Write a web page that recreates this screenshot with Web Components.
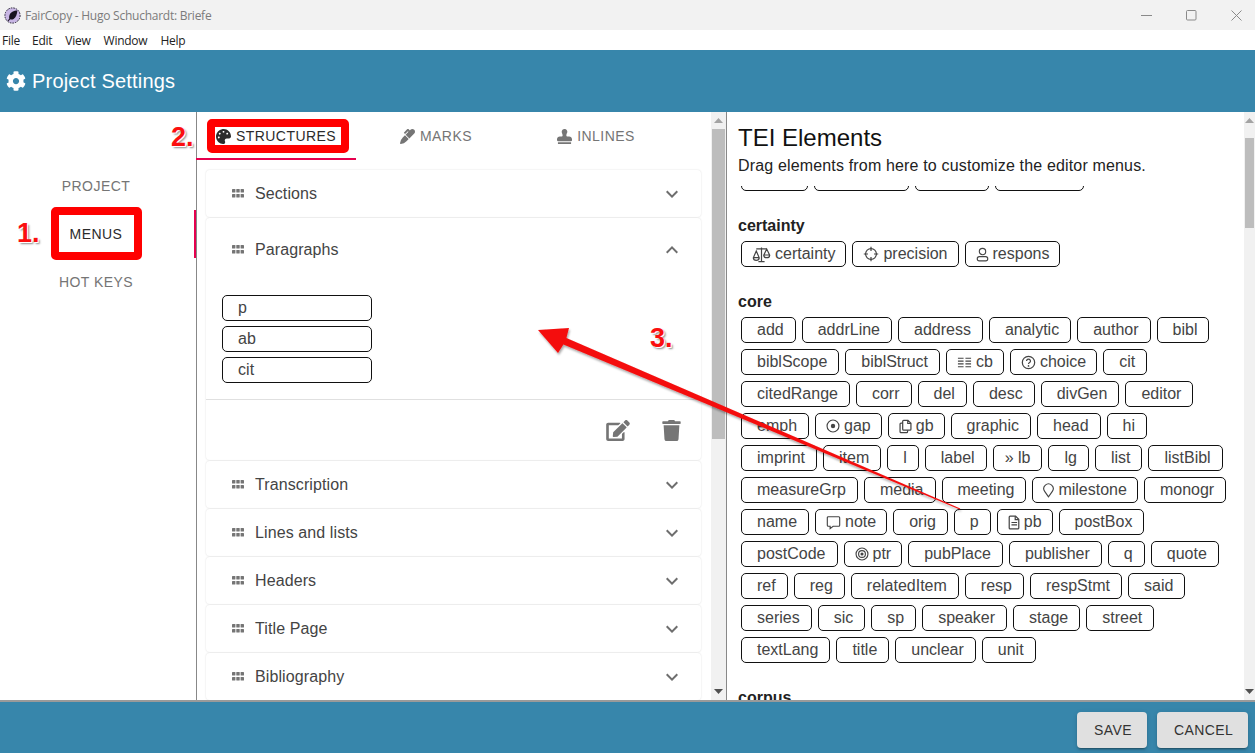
<!DOCTYPE html>
<html>
<head>
<meta charset="utf-8">
<title>FairCopy</title>
<style>
  html, body { margin: 0; padding: 0; height: 100%; overflow: hidden; background: #fff; }
  body { font-family: "Liberation Sans", Arial, sans-serif; }
</style>
</head>
<body>
<project-settings></project-settings>

<script>
const ICONS = {
  cog: ['0 0 512 512', '<path fill="currentColor" d="M487.4 315.7l-42.6-24.6c4.3-23.2 4.3-47 0-70.2l42.6-24.6c4.9-2.8 7.1-8.6 5.5-14-11.1-35.6-30-67.8-54.7-94.6-3.8-4.1-10-5.1-14.8-2.3L380.8 110c-17.9-15.4-38.5-27.3-60.8-35.1V25.8c0-5.6-3.9-10.5-9.4-11.7-36.7-8.2-74.3-7.8-109.2 0-5.5 1.2-9.4 6.1-9.4 11.7V75c-22.2 7.9-42.8 19.8-60.8 35.1L88.7 85.5c-4.9-2.8-11-1.9-14.8 2.3-24.7 26.7-43.6 58.9-54.7 94.6-1.7 5.4.6 11.2 5.5 14L67.3 221c-4.3 23.2-4.3 47 0 70.2l-42.6 24.6c-4.9 2.8-7.1 8.6-5.5 14 11.1 35.6 30 67.8 54.7 94.6 3.8 4.1 10 5.1 14.8 2.3l42.6-24.6c17.9 15.4 38.5 27.3 60.8 35.1v49.2c0 5.6 3.9 10.5 9.4 11.7 36.7 8.2 74.3 7.8 109.2 0 5.5-1.2 9.4-6.1 9.4-11.7v-49.2c22.2-7.9 42.8-19.8 60.8-35.1l42.6 24.6c4.9 2.8 11 1.9 14.8-2.3 24.7-26.7 43.6-58.9 54.7-94.6 1.5-5.5-.7-11.3-5.6-14.1zM256 336c-44.1 0-80-35.9-80-80s35.9-80 80-80 80 35.9 80 80-35.9 80-80 80z"/>'],
  palette: ['0 0 512 512', '<path fill="currentColor" d="M204.3 5C104.9 24.4 24.8 104.3 5.2 203.4c-37 187 131.7 326.4 258.8 306.7 41.2-6.4 61.4-54.6 42.5-91.7-23.1-45.4 9.9-98.4 60.9-98.4h79.7c35.8 0 64.8-29.6 64.9-65.3C511.5 97.1 368.1-26.9 204.3 5zM96 320c-17.7 0-32-14.3-32-32s14.3-32 32-32 32 14.3 32 32-14.3 32-32 32zm32-128c-17.7 0-32-14.3-32-32s14.3-32 32-32 32 14.3 32 32-14.3 32-32 32zm128-64c-17.7 0-32-14.3-32-32s14.3-32 32-32 32 14.3 32 32-14.3 32-32 32zm128 64c-17.7 0-32-14.3-32-32s14.3-32 32-32 32 14.3 32 32-14.3 32-32 32z"/>'],
  marker: ['0 0 512 512', '<path fill="currentColor" d="M93.95 290.03A327.038 327.038 0 0 0 .17 485.11l-.03.23c-1.7 15.28 11.21 28.2 26.49 26.51a327.02 327.02 0 0 0 195.34-93.8l75.4-75.4-128.02-128.02-75.4 75.4zM485.49 26.51c-35.35-35.35-92.67-35.35-128.02 0l-21.76 21.76-36.56-36.55c-15.62-15.62-40.95-15.62-56.56 0L138.47 115.84c-6.25 6.25-6.25 16.38 0 22.63l22.62 22.62c6.25 6.25 16.38 6.25 22.63 0l87.15-87.15 19.59 19.59L191.98 192 320 320.02l165.49-165.49c35.35-35.35 35.35-92.66 0-128.02z"/>'],
  stamp: ['0 0 512 512', '<path fill="currentColor" d="M32 512h448v-64H32v64zm384-256h-66.56c-16.26 0-29.44-13.18-29.44-29.44v-9.46c0-27.37 8.88-53.41 21.46-77.72 9.11-17.61 12.9-38.39 9.05-60.42-6.77-38.78-38.47-70.7-77.26-77.45C212.62-9.04 160 37.33 160 96c0 14.16 3.12 27.54 8.69 39.58C182.02 164.43 192 194.7 192 226.49v.07c0 16.26-13.18 29.44-29.44 29.44H96c-53.02 0-96 42.98-96 96v32c0 17.67 14.33 32 32 32h448c17.67 0 32-14.33 32-32v-32c0-53.02-42.98-96-96-96z"/>'],
  edit: ['0 0 576 512', '<path fill="currentColor" d="M402.6 83.2l90.2 90.2c3.8 3.8 3.8 10 0 13.8L274.4 405.6l-92.8 10.3c-12.4 1.4-22.9-9.1-21.5-21.5l10.3-92.8L388.8 83.2c3.8-3.8 10-3.8 13.8 0zm162-22.9l-48.8-48.8c-15.2-15.2-39.9-15.2-55.2 0l-35.4 35.4c-3.8 3.8-3.8 10 0 13.8l90.2 90.2c3.8 3.8 10 3.8 13.8 0l35.4-35.4c15.2-15.3 15.2-40 0-55.2zM384 346.2V448H64V128h229.8c3.2 0 6.2-1.3 8.5-3.5l40-40c7.6-7.6 2.2-20.5-8.5-20.5H48C21.5 64 0 85.5 0 112v352c0 26.5 21.5 48 48 48h352c26.5 0 48-21.5 48-48V306.2c0-10.7-12.9-16-20.5-8.5l-40 40c-2.2 2.3-3.5 5.3-3.5 8.5z"/>'],
  trash: ['0 0 448 512', '<path fill="currentColor" d="M432 32H312l-9.4-18.7A24 24 0 0 0 281.1 0H166.8a23.72 23.72 0 0 0-21.4 13.3L136 32H16A16 16 0 0 0 0 48v32a16 16 0 0 0 16 16h416a16 16 0 0 0 16-16V48a16 16 0 0 0-16-16zM53.2 467a48 48 0 0 0 47.9 45h245.8a48 48 0 0 0 47.9-45L416 128H32z"/>'],
  grip: ['0 0 12 9', '<g fill="currentColor"><rect x="0" y="0" width="3.4" height="3.6" rx=".6"/><rect x="4.3" y="0" width="3.4" height="3.6" rx=".6"/><rect x="8.6" y="0" width="3.4" height="3.6" rx=".6"/><rect x="0" y="5" width="3.4" height="3.6" rx=".6"/><rect x="4.3" y="5" width="3.4" height="3.6" rx=".6"/><rect x="8.6" y="5" width="3.4" height="3.6" rx=".6"/></g>'],
  down: ['0 0 24 24', '<path fill="currentColor" d="M16.59 8.59L12 13.17 7.41 8.59 6 10l6 6 6-6z"/>'],
  up: ['0 0 24 24', '<path fill="currentColor" d="M12 8l-6 6 1.41 1.41L12 10.83l4.59 4.58L18 14z"/>'],
  scale: ['0 0 16 16', '<g fill="none" stroke="currentColor" stroke-width="1"><path d="M8 2v11.5M5.4 14h5.2M3.6 3.2h8.8"/><path d="M3.6 5L1.2 10.6h4.8zM1.2 11a2.4 1.9 0 0 0 4.8 0"/><path d="M12.4 3.4L10 8.4h4.8zM10 8.8a2.4 1.9 0 0 0 4.8 0"/></g>'],
  crosshair: ['0 0 16 16', '<g fill="none" stroke="currentColor" stroke-width="1.2"><circle cx="8" cy="8" r="5.4"/><path d="M8 .8v4.2M8 11v4.2M.8 8h4.2M11 8h4.2"/></g>'],
  user: ['1.5 0 13 16', '<g fill="none" stroke="currentColor" stroke-width="1.2"><circle cx="8" cy="4.8" r="3.4"/><rect x="2.4" y="10.2" width="11.2" height="4.6" rx="2.2"/></g>'],
  columns: ['0 0 16 16', '<path fill="none" stroke="currentColor" stroke-width="1.2" d="M1 3.5h6M9 3.5h6M1 6.5h6M9 6.5h6M1 9.5h6M9 9.5h6M1 12.5h6M9 12.5h6"/>'],
  question: ['0 0 16 16', '<g fill="none" stroke="currentColor" stroke-width="1.3"><circle cx="8" cy="8" r="6.6"/><path d="M5.9 6.4a2.1 2 0 1 1 3.2 1.7c-.7.4-1.1.8-1.1 1.6"/></g><circle cx="8" cy="11.6" r=".9" fill="currentColor"/>'],
  dot: ['0 0 16 16', '<circle cx="8" cy="8" r="6.8" fill="none" stroke="currentColor" stroke-width="1.3"/><circle cx="8" cy="8" r="2.5" fill="currentColor"/>'],
  copy: ['1.5 0 13 16', '<g fill="none" stroke="currentColor" stroke-width="1.3"><path d="M6 1.4h4.6l3.2 3.2v6.2a1 1 0 0 1-1 1H6a1 1 0 0 1-1-1V2.4a1 1 0 0 1 1-1zM10.4 1.4v3.4h3.4"/><path d="M5 4.4H3.2a1 1 0 0 0-1 1v8.2a1 1 0 0 0 1 1h6a1 1 0 0 0 1-1V12"/></g>'],
  pin: ['2.5 0 11 16', '<path fill="none" stroke="currentColor" stroke-width="1.2" d="M8 14.8L3.9 8.9A5 5 0 1 1 12.1 8.9z"/>'],
  comment: ['0 0 16 16', '<path fill="none" stroke="currentColor" stroke-width="1.2" d="M2.4 1.8h11.2a1 1 0 0 1 1 1v8.2a1 1 0 0 1-1 1H7.6l-3.2 2.6V12H2.4a1 1 0 0 1-1-1V2.8a1 1 0 0 1 1-1z"/>'],
  file: ['1.7 0 12 16', '<g fill="none" stroke="currentColor" stroke-width="1.3"><path d="M3.6 1.2h5.8l3.4 3.4v9.2a1 1 0 0 1-1 1H3.6a1 1 0 0 1-1-1V2.2a1 1 0 0 1 1-1z"/><path d="M9 1.4v3.6h3.6M5 8h6M5 10.6h6"/></g>'],
  bullseye: ['0 0 16 16', '<g fill="none" stroke="currentColor" stroke-width="1.3"><circle cx="8" cy="8" r="6.8"/><circle cx="8" cy="8" r="3.9"/></g><circle cx="8" cy="8" r="1.8" fill="currentColor"/>'],
};

// rendered size of the chip icons, the glyphs are not all the same width
const CHIP_ICON = {
  scale: [19, 19], crosshair: [16, 16], user: [13, 15], columns: [15, 15], question: [15, 15],
  dot: [14, 14], copy: [13, 15], pin: [11, 15], comment: [15, 15], file: [12, 15], bullseye: [14, 14],
};

function icon(name, w, h) {
  const [box, body] = ICONS[name];
  return `<svg viewBox="${box}" width="${w}" height="${h || w}" style="display:block;flex:none">${body}</svg>`;
}

class WindowBar extends HTMLElement {
  constructor() {
    super();
    this.attachShadow({ mode: 'open' }).innerHTML = `
      <style>
        :host { display: block; font-family: "Open Sans", sans-serif; font-size: 12px; letter-spacing: -.25px; }
        .title { height: 30px; background: #f2f2f2; display: flex; align-items: center; color: #7b7b7b; padding-left: 4px; }
        .title span { margin-left: 4px; flex: 1; }
        .ctl { display: flex; gap: 34px; padding-right: 13px; align-items: center; color: #8a8a8a; }
        .menu { height: 20px; display: flex; align-items: center; color: #222; background: #fff; }
      </style>
      <div class="title">
        <svg width="17" height="17" viewBox="0 0 17 17" style="flex:none">
          <circle cx="8.5" cy="8.5" r="7.6" fill="#c8b6e4" stroke="#221b33" stroke-width="1" stroke-dasharray="1.6 1"/>
          <path fill="#17131f" d="M13.4 3.4c-3.6 0-7 1.6-8 5-.4 1.3-.3 2.4 0 3.2L3.8 13.6l.7.6 1.7-2c1 .4 2.2.3 3.4-.3 2.5-1.5 3.5-5 3.8-8.5z"/>
        </svg>
        <span>FairCopy - Hugo Schuchardt: Briefe</span>
        <div class="ctl">
          <svg width="11" height="11" viewBox="0 0 11 11"><path d="M0 5.5h11" stroke="currentColor" fill="none"/></svg>
          <svg width="11" height="11" viewBox="0 0 11 11"><rect x=".5" y=".5" width="9.5" height="9.5" rx="1" stroke="currentColor" fill="none"/></svg>
          <svg width="11" height="11" viewBox="0 0 11 11"><path d="M.5.5l10 10M10.5.5l-10 10" stroke="currentColor" fill="none"/></svg>
        </div>
      </div>
      <div class="menu">
        <span style="margin-left:2px">File</span>
        <span style="margin-left:12px">Edit</span>
        <span style="margin-left:13px">View</span>
        <span style="margin-left:13px">Window</span>
        <span style="margin-left:13px">Help</span>
      </div>`;
  }
}

class NavTab extends HTMLElement {
  constructor() {
    super();
    this.attachShadow({ mode: 'open' }).innerHTML = `
      <style>
        :host { display: flex; align-items: center; justify-content: center; height: 48px; box-sizing: border-box;
          font-size: 14px; letter-spacing: .45px; color: #757575; gap: 5px; position: relative; white-space: nowrap; }
        :host([orient=v]) { padding-right: 4px; }
        :host([selected]) { color: #2b2b2b; }
        :host([selected])::after { content: ''; position: absolute; background: #e6004e; }
        :host([orient=v][selected])::after { right: 0; top: 0; bottom: 0; width: 2px; }
        :host([orient=h][selected])::after { left: 0; right: 0; bottom: 0; height: 2px; }
      </style>
      <span id="i" style="display:contents"></span><slot></slot>`;
  }
  connectedCallback() {
    const name = this.getAttribute('icon');
    if (name) this.shadowRoot.getElementById('i').innerHTML = icon(name, 15);
  }
}

class MenuSection extends HTMLElement {
  constructor() {
    super();
    this.attachShadow({ mode: 'open' }).innerHTML = `
      <style>
        :host { display: block; background: #fff; border-radius: 4px; box-shadow: 0 0 2px rgba(0,0,0,.14); margin-bottom: 1px; color: #333; font-size: 16px; letter-spacing: .1px; }
        .head { height: 47px; display: flex; align-items: center; padding: 0 17px 0 26px; box-sizing: border-box; }
        :host([open]) .head { height: 63px; }
        .grip { color: #757575; margin-right: 11px; }
        .label { flex: 1; color: #444; }
        .arrow { color: #6e6e6e; }
      </style>
      <div class="head">
        <span class="grip">${icon('grip', 12, 9)}</span>
        <span class="label"><slot name="label"></slot></span>
        <span class="arrow" id="arrow"></span>
      </div>
      <slot></slot>`;
  }
  connectedCallback() {
    this.shadowRoot.getElementById('arrow').innerHTML = icon(this.hasAttribute('open') ? 'up' : 'down', 24);
  }
}

class SlotItem extends HTMLElement {
  constructor() {
    super();
    this.attachShadow({ mode: 'open' }).innerHTML = `
      <style>
        :host { display: block; width: 150px; height: 26px; box-sizing: border-box; border: 1px solid #111; border-radius: 5px;
          padding-left: 15px; line-height: 24px; font-size: 16px; color: #444; }
      </style><slot></slot>`;
  }
}

class TeiChip extends HTMLElement {
  constructor() {
    super();
    this.attachShadow({ mode: 'open' }).innerHTML = `
      <style>
        :host { display: inline-flex; align-items: center; height: 26px; box-sizing: border-box;
          border: 1px solid #111; border-radius: 5px; padding: 0 11px 0 15px; font-size: 16px; color: #444; gap: 4px; white-space: nowrap; }
        :host([icon]) { padding: 0 10px; }
      </style>
      <span id="i" style="display:contents"></span><slot></slot>`;
  }
  connectedCallback() {
    const name = this.getAttribute('icon');
    if (name) this.shadowRoot.getElementById('i').innerHTML = icon(name, ...CHIP_ICON[name]);
  }
}

class TeiGroup extends HTMLElement {
  constructor() {
    super();
    this.attachShadow({ mode: 'open' }).innerHTML = `
      <style>
        :host { display: block; margin-bottom: 23px; }
        h3 { margin: 0 0 4px; font-size: 16px; line-height: 23px; font-weight: bold; color: #222; }
        .chips { display: flex; flex-wrap: wrap; gap: 6px; padding-left: 3px; }
      </style>
      <h3></h3>
      <div class="chips"><slot></slot></div>`;
  }
  connectedCallback() {
    this.shadowRoot.querySelector('h3').textContent = this.getAttribute('name');
  }
}

class FakeScrollbar extends HTMLElement {
  constructor() {
    super();
    this.attachShadow({ mode: 'open' }).innerHTML = `
      <style>
        :host { display: flex; flex-direction: column; flex: none; width: 15px; background: #f1f1f1; }
        .btn { height: 17px; flex: none; display: flex; align-items: center; justify-content: center; }
        .thumb { background: #bdbdbd; margin: 0 1px; flex: none; }
        .rest { flex: 1; }
      </style>
      <div class="btn"><svg width="9" height="5"><path d="M4.5 0L9 5H0z" fill="#a3a3a3"/></svg></div>
      <div class="thumb" id="t"></div>
      <div class="rest"></div>
      <div class="btn"><svg width="9" height="5"><path d="M0 0h9L4.5 5z" fill="#505050"/></svg></div>`;
  }
  connectedCallback() {
    const t = this.shadowRoot.getElementById('t');
    t.style.height = this.getAttribute('thumb') + 'px';
    t.style.marginTop = (this.getAttribute('offset') || 0) + 'px';
  }
}

const GROUPS = [
  ['certainty', 'certainty:scale precision:crosshair respons:user'],
  ['core', 'add addrLine address analytic author bibl biblScope biblStruct cb:columns choice:question cit citedRange corr del desc divGen editor emph gap:dot gb:copy graphic head hi imprint item l label lb:raquo lg list listBibl measureGrp media meeting milestone:pin monogr name note:comment orig p pb:file postBox postCode ptr:bullseye pubPlace publisher q quote ref reg relatedItem resp respStmt said series sic sp speaker stage street textLang title unclear unit'],
];

class ElementPalette extends HTMLElement {
  constructor() {
    super();
    const groups = GROUPS.map(([name, items]) => `<tei-group name="${name}">${items.split(' ').map(item => {
      const [label, ic] = item.split(':');
      if (ic === 'raquo') return `<tei-chip style="padding:0 11px">» ${label}</tei-chip>`;
      return `<tei-chip${ic ? ` icon="${ic}"` : ''}>${label}</tei-chip>`;
    }).join('')}</tei-group>`).join('');
    this.attachShadow({ mode: 'open' }).innerHTML = `
      <style>
        :host { display: flex; flex: 1; min-width: 0; min-height: 0; }
        .body { flex: 1; min-width: 0; padding-left: 11px; display: flex; flex-direction: column; }
        h2 { margin: 14px 0 0; font-size: 24px; line-height: 24px; font-weight: normal; color: #111; }
        p { margin: 6px 0 0; font-size: 16px; line-height: 19px; color: #222; letter-spacing: .16px; }
        .scroll { flex: 1; min-height: 0; overflow: hidden; margin-top: 11px; padding-right: 17px; }
        .cut { display: flex; gap: 6px; padding-left: 3px; margin-top: -21px; margin-bottom: 23px; }
        .cut i { display: block; height: 26px; box-sizing: border-box; border: 1px solid #111; border-radius: 5px; }
        h3.last { margin: 0; font-size: 16px; line-height: 23px; color: #222; }
      </style>
      <div class="body">
        <h2>TEI Elements</h2>
        <p>Drag elements from here to customize the editor menus.</p>
        <div class="scroll">
          <div class="cut"><i style="width:67px"></i><i style="width:95px"></i><i style="width:74px"></i><i style="width:89px"></i></div>
          ${groups}
          <h3 class="last">corpus</h3>
        </div>
      </div>
      <fake-scrollbar thumb="90" offset="9" style="width:11px"></fake-scrollbar>`;
  }
}

class CalloutLayer extends HTMLElement {
  constructor() {
    super();
    this.attachShadow({ mode: 'open' }).innerHTML = `
      <style>
        :host { position: absolute; inset: 0; pointer-events: none; display: block; font-family: "Liberation Sans", sans-serif; }
        .box { position: absolute; border: 8px solid #ff0000; border-radius: 5px; box-sizing: border-box; }
        .num { position: absolute; font-size: 27px; font-weight: bold; color: #fb0f0f; line-height: 26px;
          text-shadow: 1px 1px 0 #fff, 2px 2px 2px rgba(0,0,0,.45); }
        svg { position: absolute; left: 0; top: 0; }
      </style>
      <div class="box" style="left:207px;top:119px;width:142px;height:34px"></div>
      <div class="box" style="left:51px;top:207px;width:91px;height:53px"></div>
      <div class="num" style="left:17px;top:220px">1.</div>
      <div class="num" style="left:171px;top:124px">2.</div>
      <div class="num" style="left:650px;top:325px">3.</div>
      <svg width="1255" height="753" viewBox="0 0 1255 753">
        <defs><filter id="s" x="-5%" y="-5%" width="110%" height="120%"><feDropShadow dx="1" dy="2" stdDeviation="1.2" flood-color="#000" flood-opacity=".35"/></filter></defs>
        <path filter="url(#s)" fill="#f40d0d" d="M538 330L569 328L566.4 338L960.2 508.5L959.8 509.5L563.4 344.4L558 353Z"/>
      </svg>`;
  }
}

class ProjectSettings extends HTMLElement {
  constructor() {
    super();
    this.attachShadow({ mode: 'open' }).innerHTML = `
      <style>
        :host { display: flex; flex-direction: column; height: 753px; position: relative; overflow: hidden; font-family: "Liberation Sans", sans-serif; }
        .header { height: 62px; flex: none; background: #3786ab; color: #fff; display: flex; align-items: center; padding-left: 6px; gap: 6px; font-size: 20px; letter-spacing: .2px; }
        .main { flex: 1; min-height: 0; display: flex; }
        .side { width: 196px; flex: none; padding-top: 50px; box-sizing: border-box; }
        .center { width: 514px; flex: none; border-left: 1px solid #888; display: flex; flex-direction: column; }
        .tabs { display: grid; grid-template-columns: repeat(3, 160px); flex: none; margin-left: -1px; }
        .cards { flex: 1; min-height: 0; overflow: hidden; padding: 10px 10px 0 9px; }
        .chips { display: flex; flex-direction: column; gap: 5px; padding: 14px 16px 16px; }
        .open-foot { border-top: 1px solid #e0e0e0; height: 60px; display: flex; justify-content: flex-end; align-items: center; padding-right: 20px; gap: 32px; color: #757575; }
        .split { width: 1px; background: #888; flex: none; }
        .footer { height: 41px; flex: none; border-top: 2px solid #9a9a9a; padding-top: 10px; background: #3786ab; display: flex; justify-content: flex-end; align-items: flex-start; gap: 10px; padding-right: 7px; }
        button { font: 14px "Liberation Sans", sans-serif; letter-spacing: .4px; height: 36px; border: 0; border-radius: 4px; background: #e0e0e0; color: #333; padding: 0 0 0 2px;
          box-shadow: 0 3px 1px -2px rgba(0,0,0,.2), 0 2px 2px 0 rgba(0,0,0,.14), 0 1px 5px 0 rgba(0,0,0,.12); }
      </style>
      <window-bar></window-bar>
      <div class="header">${icon('cog', 20)}<span>Project Settings</span></div>
      <div class="main">
        <div class="side">
          <nav-tab orient="v">PROJECT</nav-tab>
          <nav-tab orient="v" selected>MENUS</nav-tab>
          <nav-tab orient="v">HOT KEYS</nav-tab>
        </div>
        <div class="center">
          <div class="tabs">
            <nav-tab orient="h" icon="palette" selected>STRUCTURES</nav-tab>
            <nav-tab orient="h" icon="marker">MARKS</nav-tab>
            <nav-tab orient="h" icon="stamp">INLINES</nav-tab>
          </div>
          <div class="cards">
            <menu-section><span slot="label">Sections</span></menu-section>
            <menu-section open>
              <span slot="label">Paragraphs</span>
              <div class="chips">
                <slot-item>p</slot-item><slot-item>ab</slot-item><slot-item>cit</slot-item>
              </div>
              <div class="open-foot">${icon('edit', 24, 21)}${icon('trash', 19, 21)}</div>
            </menu-section>
            <menu-section><span slot="label">Transcription</span></menu-section>
            <menu-section><span slot="label">Lines and lists</span></menu-section>
            <menu-section><span slot="label">Headers</span></menu-section>
            <menu-section><span slot="label">Title Page</span></menu-section>
            <menu-section><span slot="label">Bibliography</span></menu-section>
          </div>
        </div>
        <fake-scrollbar thumb="310"></fake-scrollbar>
        <div class="split"></div>
        <element-palette></element-palette>
      </div>
      <div class="footer">
        <button style="width:70px">SAVE</button>
        <button style="width:91px">CANCEL</button>
      </div>
      <callout-layer></callout-layer>`;
  }
}

customElements.define('window-bar', WindowBar);
customElements.define('nav-tab', NavTab);
customElements.define('menu-section', MenuSection);
customElements.define('slot-item', SlotItem);
customElements.define('tei-chip', TeiChip);
customElements.define('tei-group', TeiGroup);
customElements.define('fake-scrollbar', FakeScrollbar);
customElements.define('element-palette', ElementPalette);
customElements.define('callout-layer', CalloutLayer);
customElements.define('project-settings', ProjectSettings);
</script>
</body>
</html>
